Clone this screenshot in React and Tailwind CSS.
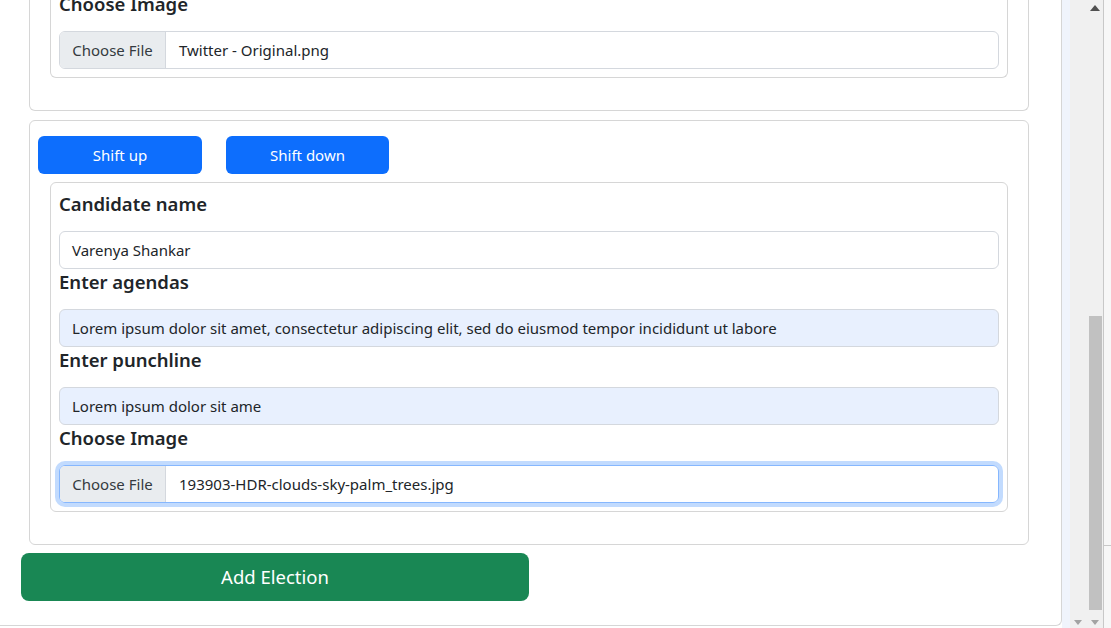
import React from "react";

const font = { fontFamily: '"Noto Sans", "Open Sans", Arial, sans-serif' };

const Label = ({ children }) => (
  <div className="h-[24px] text-[18.5px] leading-[24px] font-semibold text-[#212529]">{children}</div>
);

const TextInput = ({ value, autofill }) => (
  <div
    className={`h-[38px] rounded-[6px] border border-[#d4d8de] px-[12px] flex items-center text-[15px] text-[#212529] ${
      autofill ? "bg-[#e8f0fe]" : "bg-white"
    }`}
  >
    {value}
  </div>
);

const FileInput = ({ fileName, focused }) => (
  <div
    className={`h-[38px] rounded-[6px] border flex items-stretch text-[15px] overflow-hidden ${
      focused
        ? "border-[#86b7fe] shadow-[0_0_0_4px_rgba(13,110,253,0.25)]"
        : "border-[#d4d8de]"
    }`}
  >
    <div className="w-[106px] bg-[#e9ecef] border-r border-[#d4d8de] flex items-center justify-center text-[#343a40]">
      Choose File
    </div>
    <div className="flex items-center pl-[13px] text-[#212529]">{fileName}</div>
  </div>
);

const CandidateCard = ({ name, agenda, punchline, fileName, focused }) => (
  <div className="ml-[20px] mr-[20px] border border-[#d6d6d6] rounded-[6px] px-[8px] pt-[9px] pb-[8px]">
    <Label>Candidate name</Label>
    <div className="mt-[15px]"><TextInput value={name} /></div>
    <div className="mt-[1px]"><Label>Enter agendas</Label></div>
    <div className="mt-[15px]"><TextInput value={agenda} autofill /></div>
    <div className="mt-[1px]"><Label>Enter punchline</Label></div>
    <div className="mt-[15px]"><TextInput value={punchline} autofill /></div>
    <div className="mt-[1px]"><Label>Choose Image</Label></div>
    <div className="mt-[15px]"><FileInput fileName={fileName} focused={focused} /></div>
  </div>
);

export default function App() {
  return (
    <div className="w-[1111px] h-[628px] overflow-hidden flex bg-white" style={font}>
      {/* main scrolled form */}
      <div className="w-[1062px] h-[626px] border-r border-b border-[#d6d6d6] rounded-br-[6px] overflow-hidden">
        <div className="ml-[29px] w-[1000px] -mt-[1px]">
          {/* previous candidate, scrolled off the top */}
          <div className="border border-t-0 border-[#d6d6d6] rounded-b-[6px] pb-[32px]">
            <div className="ml-[20px] mr-[20px] border border-t-0 border-[#d6d6d6] rounded-b-[6px] px-[8px] pb-[8px]">
              <div className="-mt-[8px]"><Label>Choose Image</Label></div>
              <div className="mt-[15px]"><FileInput fileName="Twitter - Original.png" /></div>
            </div>
          </div>

          {/* current candidate */}
          <div className="mt-[9px] border border-[#d6d6d6] rounded-[6px] pt-[15px] pb-[32px]">
            <div className="flex gap-[24px] pl-[8px]">
              <button className="w-[164px] h-[38px] rounded-[6px] bg-[#0d6efd] text-white text-[15px]">Shift up</button>
              <button className="w-[163px] h-[38px] rounded-[6px] bg-[#0d6efd] text-white text-[15px]">Shift down</button>
            </div>
            <div className="mt-[8px]">
              <CandidateCard
                name="Varenya Shankar"
                agenda="Lorem ipsum dolor sit amet, consectetur adipiscing elit, sed do eiusmod tempor incididunt ut labore"
                punchline="Lorem ipsum dolor sit ame"
                fileName="193903-HDR-clouds-sky-palm_trees.jpg"
                focused
              />
            </div>
          </div>
        </div>
        <div className="mt-[8px] ml-[21px]">
          <button className="w-[508px] h-[48px] rounded-[8px] bg-[#198754] text-white text-[18.5px]">Add Election</button>
        </div>
      </div>

      {/* page edge */}
      <div className="w-[8px] bg-[#f0f4fc]" />

      {/* scrollbar */}
      <div className="w-[34px] h-full bg-[#f0f0f0] border-r border-[#c8c8c8] flex flex-col">
        <div className="h-[16px] flex justify-end pr-[3px] pt-[5px]">
          <svg width="10" height="6" viewBox="0 0 10 6"><path d="M5 0 L10 6 L0 6 Z" fill="#505050" /></svg>
        </div>
        <div className="flex-1 flex justify-end pr-[1px] pt-[300px] pb-[10px]">
          <div className="w-[13px] h-full bg-[#c1c1c1]" />
        </div>
        <div className="h-[8px] flex justify-between px-[4px]">
          <svg width="8" height="5" viewBox="0 0 8 5"><path d="M0 0 L8 0 L4 5 Z" fill="#a3a3a3" /></svg>
          <svg width="8" height="5" viewBox="0 0 8 5"><path d="M0 0 L8 0 L4 5 Z" fill="#a3a3a3" /></svg>
        </div>
      </div>

      {/* outer window edge */}
      <div className="flex-1 bg-[#f7f7f7] flex flex-col">
        <div className="h-[545px]" />
        <div className="border-t border-[#c8c8c8]" />
      </div>
    </div>
  );
}
